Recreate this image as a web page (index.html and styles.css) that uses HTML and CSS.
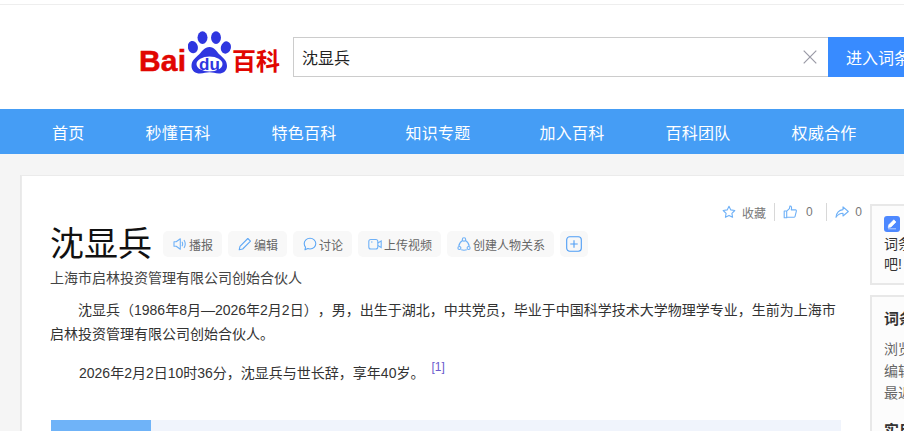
FILE: index.html
```html
<!DOCTYPE html>
<html lang="zh-CN">
<head>
<meta charset="utf-8">
<title>沈显兵 - 百度百科</title>
<link rel="stylesheet" href="styles.css">
</head>
<body>
<div class="topbar"></div>
<header class="header">
  <a class="logo">
    <span class="logo-bai">Bai</span>
    <svg class="logo-paw" viewBox="0 0 44 44" width="44" height="44">
      <g fill="#2f36e0">
        <ellipse cx="4.8" cy="16" rx="5" ry="6.2" transform="rotate(-14 5 16)"/>
        <ellipse cx="14.5" cy="6.6" rx="5" ry="6.3"/>
        <ellipse cx="28" cy="6.6" rx="5" ry="6.3"/>
        <ellipse cx="38" cy="16.5" rx="5" ry="6.2" transform="rotate(14 38 16)"/>
        <path d="M21.5 16c5 0 6.500 4 10 7.500 3 3 7.500 5.500 7.500 11.500 0 5-4 7.500-8 7.500-4 0-6-1.200-9.500-1.200s-5.500 1.200-9.500 1.200c-4.500 0-8.500-2.500-8.500-7.500 0-6 4.500-8.500 7.500-11.500 3.500-3.500 5.500-7.500 10.500-7.500z"/>
      </g>
      <ellipse cx="21.500" cy="33" rx="13" ry="7.500" fill="#fff"/>
      <text class="logo-du" x="21.500" y="39" text-anchor="middle">du</text>
    </svg>
    <span class="logo-ke">百科</span>
  </a>
  <form class="search">
    <div class="search-box">
      <span class="search-text">沈显兵</span>
      <svg class="search-clear" viewBox="0 0 14 14" width="14" height="14"><path d="M.7.7l12.600 12.600M13.300.7L.7 13.300" stroke="#9a9aa6" stroke-width="1.200" fill="none"/></svg>
    </div>
    <button class="search-btn" type="button">进入词条</button>
  </form>
</header>
<nav class="nav">
  <a class="nav-item">首页</a>
  <a class="nav-item">秒懂百科</a>
  <a class="nav-item">特色百科</a>
  <a class="nav-item nav-wide">知识专题</a>
  <a class="nav-item nav-wide">加入百科</a>
  <a class="nav-item">百科团队</a>
  <a class="nav-item">权威合作</a>
</nav>
<div class="page">
  <main class="card">
    <article class="article">
      <div class="actions">
        <svg class="ic" viewBox="0 0 14 14" width="14" height="14"><path d="M7 1.200l1.800 3.700 4 .6-2.900 2.800.7 4L7 10.400l-3.600 1.900.7-4L1.200 5.500l4-.6z" fill="none" stroke="#6fb1f7" stroke-width="1.100" stroke-linejoin="round"/></svg>
        <span class="act-text">收藏</span>
        <i class="act-div"></i>
        <svg class="ic" viewBox="0 0 14 14" width="14" height="14"><path d="M1.200 6h2.500v6.800H1.200zM3.700 6.200l2.700-2.600.5-2.600c1.500-.3 2 1.300 1.400 3.900h4.200c.8 0 1 .8.800 1.400l-1.300 5.300c-.2.500-.5.700-1 .7H3.700" fill="none" stroke="#6fb1f7" stroke-width="1.100" stroke-linejoin="round"/></svg>
        <span class="act-num act-like">0</span>
        <i class="act-div"></i>
        <svg class="ic" viewBox="0 0 14 14" width="14" height="14"><path d="M8 1.800l5.300 4.700L8 11V8.300C5 8.300 2.800 9.600 1 12.300 1.500 8 4 5 8 4.600z" fill="none" stroke="#6fb1f7" stroke-width="1.100" stroke-linejoin="round"/></svg>
        <span class="act-num act-share">0</span>
      </div>
      <div class="title-row">
        <h1 class="title">沈显兵</h1>
        <div class="tools">
          <a class="tool">
            <svg class="ic" viewBox="0 0 14 14" width="14" height="14"><path d="M1 4.800h2.200L7.300 1.800v10.400L3.200 9.200H1zM9 4.800c.8 1.300.8 3 0 4.400M11 3c1.500 2.400 1.500 5.600 0 8" fill="none" stroke="#6fb1f7" stroke-width="1.100" stroke-linejoin="round"/></svg>
            播报
          </a>
          <a class="tool">
            <svg class="ic" viewBox="0 0 14 14" width="14" height="14"><path d="M9.800 1.500l2.700 2.700-7.800 7.800-3.500.8.800-3.500z" fill="none" stroke="#5ea8f6" stroke-width="1.100" stroke-linejoin="round"/></svg>
            编辑
          </a>
          <a class="tool">
            <svg class="ic" viewBox="0 0 14 14" width="14" height="14"><path d="M7 1.300c3.300 0 5.800 2.300 5.800 5.300S10.300 12 7 12c-.8 0-1.500-.1-2.200-.4L2 12.800l.5-2.700C1.600 9.100 1.200 7.900 1.200 6.600 1.200 3.600 3.700 1.300 7 1.300z" fill="none" stroke="#5ea8f6" stroke-width="1.100" stroke-linejoin="round"/></svg>
            讨论
          </a>
          <a class="tool">
            <svg class="ic" viewBox="0 0 14 14" width="14" height="14"><rect x=".8" y="2.500" width="9" height="9.500" rx="2" fill="none" stroke="#6fb1f7" stroke-width="1.100"/><path d="M9.800 6l3.400-2v6.500L9.800 8.500M3 5h1.500" fill="none" stroke="#6fb1f7" stroke-width="1.100"/></svg>
            上传视频
          </a>
          <a class="tool">
            <svg class="ic" viewBox="0 0 14 14" width="14" height="14"><circle cx="7" cy="2.500" r="1.700" fill="none" stroke="#6fb1f7" stroke-width="1.100"/><circle cx="2.400" cy="11" r="1.500" fill="none" stroke="#6fb1f7" stroke-width="1.100"/><circle cx="11.600" cy="11" r="1.500" fill="none" stroke="#6fb1f7" stroke-width="1.100"/><path d="M4.200 12.800c1.800.6 3.800.6 5.600 0M5.500 3.500C3.500 4.700 2 6.800 1.800 9.300M8.500 3.500c2 1.200 3.500 3.300 3.700 5.800" fill="none" stroke="#6fb1f7" stroke-width="1.100"/></svg>
            创建人物关系
          </a>
          <a class="tool tool-plus">
            <svg class="ic-plus" viewBox="0 0 16 16" width="16" height="16"><rect x=".7" y=".7" width="14.600" height="14.600" rx="3" fill="none" stroke="#4e9df5" stroke-width="1.100"/><path d="M8 4.300v7.400M4.300 8h7.400" stroke="#4e9df5" stroke-width="1.100" fill="none"/></svg>
          </a>
        </div>
      </div>
      <div class="subtitle">上海市启林投资管理有限公司创始合伙人</div>
      <p class="para para-first">沈显兵（1986年8月—2026年2月2日），男，出生于湖北，中共党员，毕业于中国科学技术大学物理学专业，生前为上海市启林投资管理有限公司创始合伙人。</p>
      <p class="para para-second">2026年2月2日10时36分，沈显兵与世长辞，享年40岁。<sup class="ref">[1]</sup></p>
      <div class="catalog"><div class="catalog-tab"></div></div>
    </article>
    <aside class="side">
      <div class="side-box side-tip">
        <svg class="tip-icon" viewBox="0 0 16 16" width="16" height="16"><rect width="16" height="16" rx="3" fill="#4d88ff"/><path d="M9.800 3.800l2.200 2.200-5 5-2.800.6.600-2.800zM4 12.800h8" fill="#fff" stroke="#fff" stroke-width=".6"/></svg>
        <div class="tip-text">词条有待完善，快来编辑<br>吧!</div>
      </div>
      <div class="side-box side-stat">
        <div class="stat-title">词条统计</div>
        <div class="stat-row">浏览次数：</div>
        <div class="stat-row">编辑次数：</div>
        <div class="stat-row">最近更新：</div>
        <div class="stat-title stat-next">实用工具</div>
      </div>
    </aside>
  </main>
</div>
</body>
</html>
```
FILE: styles.css
```css
html, body {
  margin: 0;
  padding: 0;
  height: 431px;
  overflow: hidden;
  background: #f5f5f5;
  font-family: "Liberation Sans", "Noto Sans CJK SC", sans-serif;
  color: #333;
  text-spacing-trim: space-all;
}
.topbar {
  height: 4px;
  background: #fff;
  border-bottom: 1px solid #eee;
}
.header {
  height: 104px;
  background: #fff;
  display: flex;
  padding-left: 139px;
  width: 1200px;
  box-sizing: border-box;
}
.logo {
  display: flex;
  width: 154px;
  height: 71px;
  padding-top: 20px;
  box-sizing: border-box;
  align-items: flex-end;
}
.logo-bai {
  font-size: 30px;
  font-weight: 700;
  color: #e10601;
  line-height: 32px;
  height: 32px;
  width: 49px;
  letter-spacing: .2px;
  margin-bottom: -1px;
  white-space: nowrap;
  -webkit-text-stroke: .5px #e10601;
}
.logo-paw {
  display: block;
  margin-bottom: 1px;
  flex: none;
}
.logo-du {
  font-size: 17px;
  font-weight: 700;
  fill: #2f36e0;
  font-family: "Liberation Sans", sans-serif;
}
.logo-ke {
  font-size: 24px;
  font-weight: 700;
  color: #e10601;
  line-height: 26px;
  margin-bottom: 1px;
  white-space: nowrap;
}
.search {
  display: flex;
  margin: 32px 0 0 0;
  height: 40px;
}
.search-box {
  width: 535px;
  height: 40px;
  box-sizing: border-box;
  border: 1px solid #ccc;
  border-right: 0;
  display: flex;
  align-items: center;
  justify-content: space-between;
  padding: 0 11px 0 8px;
}
.search-text {
  font-size: 16px;
  color: #222;
}
.search-btn {
  width: 120px;
  height: 40px;
  border: 0;
  padding: 0 0 0 18px;
  background: #388bff;
  color: #fff;
  font: 16px "Liberation Sans", "Noto Sans CJK SC", sans-serif;
  text-align: left;
}
.nav {
  height: 45px;
  background: #459df5;
  display: flex;
  align-items: center;
  gap: 61px;
  padding-left: 52px;
  width: 1200px;
  box-sizing: border-box;
}
.nav-item {
  color: #fff;
  font-size: 16px;
  letter-spacing: .25px;
  white-space: nowrap;
}
.nav-wide {
  margin-left: 8px;
}
.page {
  padding: 21px 0 0 21px;
}
.card {
  width: 1200px;
  height: 500px;
  box-sizing: border-box;
  background: #fff;
  border: 1px solid #ebebeb;
  border-width: 1px 0 0 1px;
  padding: 0 0 0 28px;
  display: flex;
  box-shadow: -1px 0 0 #e8e8e8;
}
.article {
  width: 791px;
  flex: none;
}
.actions {
  display: flex;
  align-items: center;
  height: 20px;
  margin: 26px 0 0 672px;
  white-space: nowrap;
  width: 140px;
}
.ic {
  display: block;
  flex: none;
}
.act-text {
  font-size: 12px;
  color: #777;
  margin-left: 6px;
}
.act-div {
  width: 1px;
  height: 18px;
  background: #d8d8d8;
  margin: 0 8px 0 8px;
  flex: none;
}
.act-num {
  font-size: 12px;
  color: #777;
}
.act-like {
  margin: 0 3px 0 9px;
  width: 17px;
}
.act-share {
  margin-left: 6px;
}
.title-row {
  display: flex;
  align-items: center;
  margin-top: 7px;
  height: 30px;
}
.title {
  margin: 0 11px 0 0;
  font-size: 34px;
  line-height: 30px;
  font-weight: 400;
  color: #111;
  white-space: nowrap;
}
.tools {
  display: flex;
  gap: 6px;
}
.tool {
  display: flex;
  align-items: center;
  height: 26px;
  padding: 0 9px 0 10px;
  gap: 2px;
  background: #f8f8f8;
  border-radius: 5px;
  font-size: 12px;
  color: #666;
  white-space: nowrap;
}
.tool-plus {
  padding: 0 6px;
}
.ic-plus {
  display: block;
}
.subtitle {
  margin-top: 9px;
  font-size: 14px;
  line-height: 20px;
  color: #444;
}
.para {
  margin: 0;
  font-size: 14px;
  line-height: 24px;
  color: #333;
  text-indent: 28px;
  width: 790px;
}
.para-first {
  margin-top: 10px;
}
.para-second {
  margin-top: 15px;
  text-indent: 29px;
}
.ref {
  font-size: 12px;
  line-height: 0;
  color: #6a5acd;
  margin-left: 7px;
  vertical-align: 7px;
}
.catalog {
  margin: 35px 0 0 1px;
  height: 80px;
  background: #f0f4fc;
}
.catalog-tab {
  width: 100px;
  height: 80px;
  background: #6fb3f8;
}
.side {
  margin-left: 29px;
  width: 300px;
  padding-top: 28px;
  flex: none;
}
.side-box {
  box-sizing: border-box;
  border: 2px solid #e8e8e8;
  background: #fcfcfc;
  padding-left: 12px;
}
.side-tip {
  height: 81px;
  padding-top: 10px;
}
.tip-icon {
  display: block;
}
.tip-text {
  font-size: 14px;
  line-height: 20px;
  color: #333;
  margin-top: 2px;
}
.side-stat {
  margin-top: 10px;
  height: 200px;
  padding-top: 12px;
}
.stat-title {
  font-size: 15px;
  font-weight: 700;
  line-height: 20px;
  color: #333;
}
.stat-row {
  font-size: 14px;
  line-height: 22px;
  color: #666;
}
.stat-title + .stat-row {
  margin-top: 9px;
}
.stat-next {
  margin-top: 17px;
}
```
